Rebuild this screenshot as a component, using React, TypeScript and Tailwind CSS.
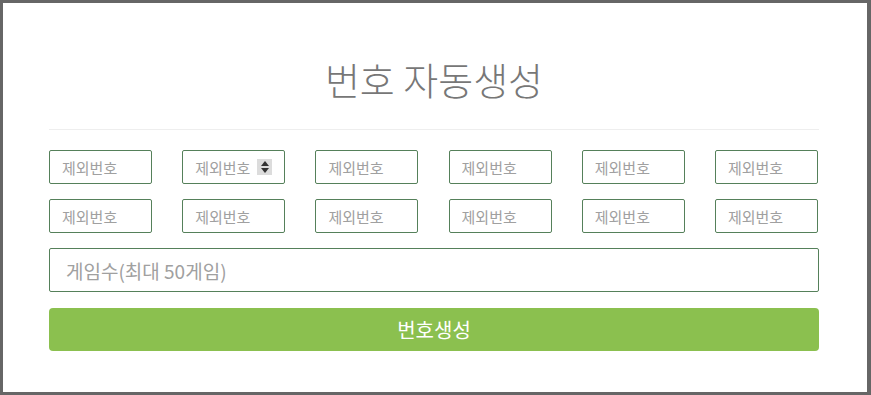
import React from "react";

const font = { fontFamily: '"Noto Sans CJK KR", "Noto Sans", sans-serif' };

function SmallInput({ spinner }: { spinner?: boolean }) {
  return (
    <div className="relative w-[103px] h-[34px]">
      <input
        type="text"
        placeholder="제외번호"
        className="w-full h-full border border-[#55805a] rounded-[2px] pl-[12px] text-[15px] text-[#555] placeholder:text-[#a0a0a0] outline-none bg-white"
        style={font}
      />
      {spinner && (
        <div className="absolute left-[75px] top-[9px] w-[15px] h-[16px] bg-[#dcdcdc] flex flex-col items-center justify-center gap-[2px]">
          <svg width="8" height="5" viewBox="0 0 8 5">
            <path d="M4 0 L8 5 L0 5 Z" fill="#333" />
          </svg>
          <svg width="8" height="5" viewBox="0 0 8 5">
            <path d="M0 0 L8 0 L4 5 Z" fill="#333" />
          </svg>
        </div>
      )}
    </div>
  );
}

export default function App() {
  return (
    <div className="w-[871px] h-[395px] bg-white border-t-[3px] border-l-[3px] border-r-[4px] border-b-[3px] border-[#666] box-border" style={font}>
      <div className="ml-[46px] w-[770px]">
        <h1 className="mt-[56px] h-[40px] leading-[40px] text-center text-[38px] text-[#777] font-light">
          번호 자동생성
        </h1>
        <div className="mt-[30px] border-t border-[#eeeeee]" />
        <div className="mt-[20px] flex justify-between w-[769px]">
          <SmallInput />
          <SmallInput spinner />
          <SmallInput />
          <SmallInput />
          <SmallInput />
          <SmallInput />
        </div>
        <div className="mt-[15px] flex justify-between w-[769px]">
          <SmallInput />
          <SmallInput />
          <SmallInput />
          <SmallInput />
          <SmallInput />
          <SmallInput />
        </div>
        <input
          type="text"
          placeholder="게임수(최대 50게임)"
          className="mt-[15px] block w-[770px] h-[44px] border border-[#55805a] rounded-[2px] pl-[16px] text-[19px] text-[#555] placeholder:text-[#a0a0a0] outline-none"
          style={font}
        />
        <button
          className="mt-[16px] block w-[770px] h-[43px] bg-[#8bc04f] rounded-[4px] text-white text-[20px] leading-[43px] text-center"
          style={font}
        >
          번호생성
        </button>
      </div>
    </div>
  );
}
